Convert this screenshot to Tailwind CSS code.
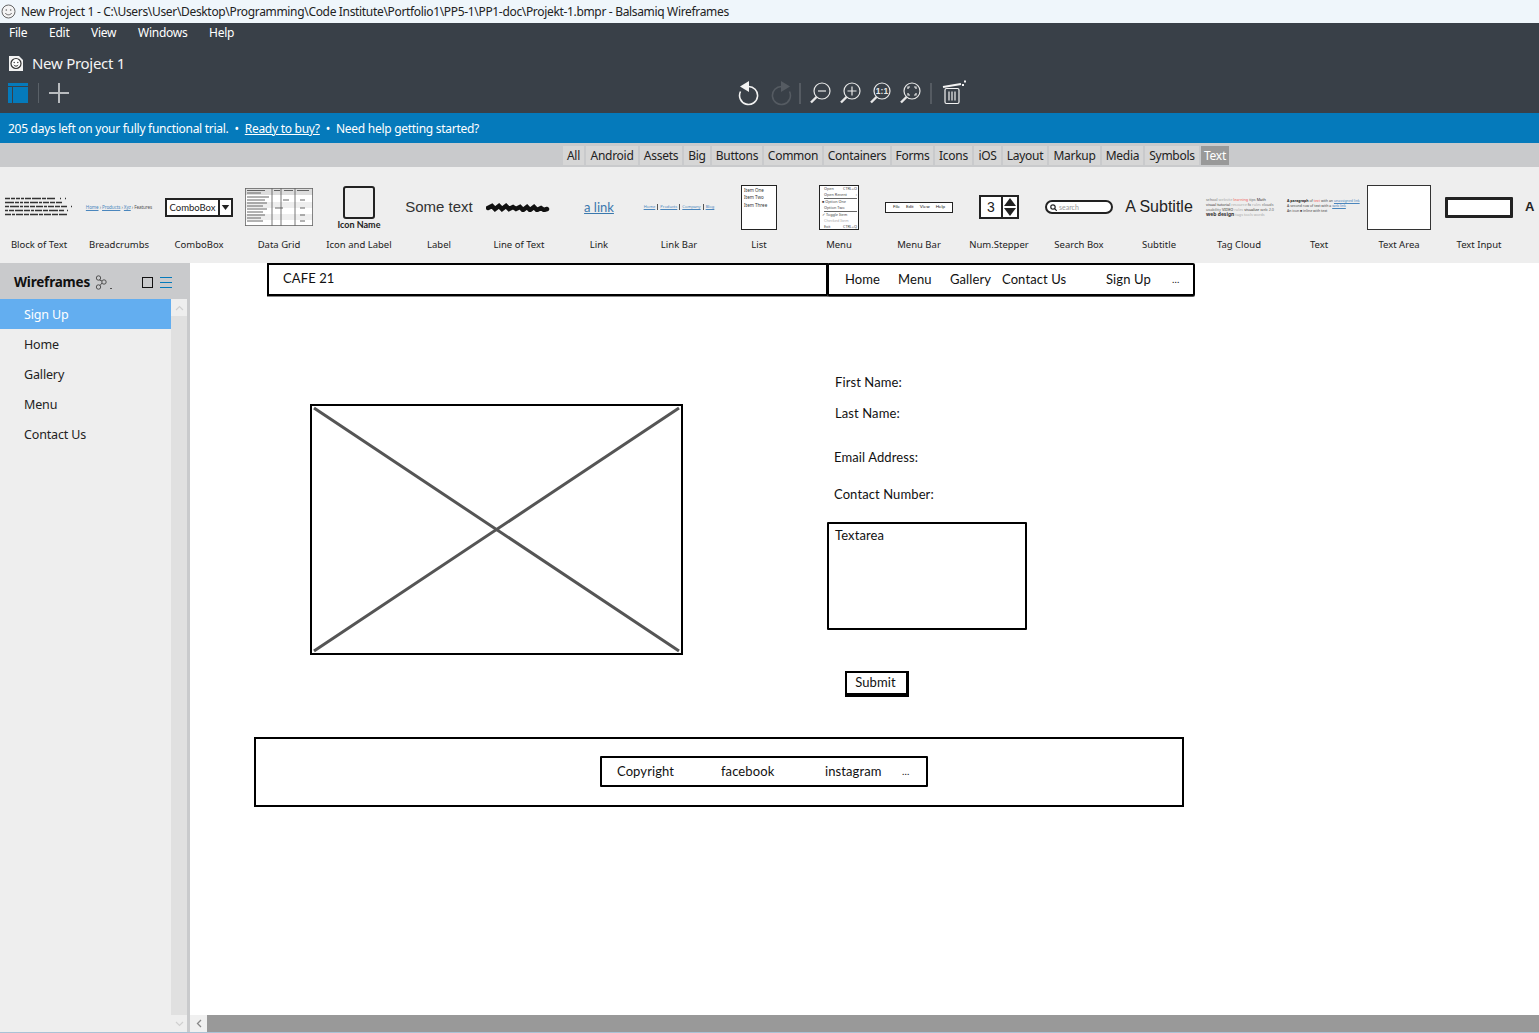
<!DOCTYPE html>
<html lang="en"><head><meta charset="utf-8"><title>Balsamiq Wireframes</title>
<script src="https://cdn.jsdelivr.net/npm/@tailwindcss/browser@4"></script></head>
<body class="m-0 bg-white">
<div class="w-[1539px] h-[1033px] overflow-hidden flex flex-col font-['Noto_Sans',sans-serif] text-[#111]">

<!-- title bar -->
<div class="h-[23px] shrink-0 bg-[#eff6fb] flex items-center text-[12px] tracking-[-0.33px] text-[#222]">
  <svg class="ml-[1px] w-[15px] h-[15px]" viewBox="0 0 15 15" fill="none" stroke="#666" stroke-width="1"><circle cx="7.5" cy="7.5" r="6.5" fill="#f4f4f4"/><circle cx="5.3" cy="6" r=".8" fill="#666" stroke="none"/><circle cx="9.7" cy="6" r=".8" fill="#666" stroke="none"/><path d="M4.3 9c1.2 2.4 5.2 2.4 6.4 0"/></svg>
  <span class="ml-[5px]">New Project 1 - C:\Users\User\Desktop\Programming\Code Institute\Portfolio1\PP5-1\PP1-doc\Projekt-1.bmpr - Balsamiq Wireframes</span>
</div>

<!-- dark header -->
<div class="h-[90px] shrink-0 bg-[#394048] text-white flex flex-col">
  <div class="h-[20px] flex items-center pl-[9px] text-[12px] tracking-[-0.25px]">
    <span class="w-[40px]">File</span><span class="w-[42px]">Edit</span><span class="w-[47px]">View</span><span class="w-[71px]">Windows</span><span>Help</span>
  </div>
  <div class="h-[41px] flex items-center pl-[9px]">
    <svg class="w-[14px] h-[15px]" viewBox="0 0 14 15"><path d="M0 0h10l4 4v11H0z" fill="#f2f2f2"/><circle cx="7" cy="7.5" r="5" fill="#fff" stroke="#333" stroke-width="1.2"/><circle cx="5.2" cy="6.5" r=".7" fill="#333"/><circle cx="8.8" cy="6.5" r=".7" fill="#333"/><path d="M4.8 9c1 1.5 3.4 1.500 4.400 0" stroke="#333" fill="none"/></svg>
    <span class="ml-[9px] text-[15px] tracking-[-0.28px] text-[#f4f4f4]">New Project 1</span>
  </div>
  <div class="h-[22px] -mt-[2px] flex items-center">
    <div class="ml-[8px] w-[20px] h-[20px] flex flex-col gap-[1px]">
      <div class="h-[3px] bg-[#057abb]"></div>
      <div class="flex-1 flex gap-[1px]"><div class="w-[4px] bg-[#057abb]"></div><div class="flex-1 bg-[#057abb]"></div></div>
    </div>
    <div class="ml-[10px] w-px h-[20px] bg-[#5a6168]"></div>
    <svg class="ml-[10px] w-[20px] h-[20px]" viewBox="0 0 20 20" stroke="#b9bcbf" stroke-width="2"><path d="M10 0v20M0 10h20"/></svg>
    <div class="ml-[669px] flex items-center">
      <svg class="w-[24px] h-[26px]" viewBox="0 0 24 26" fill="none" stroke="#f2f2f2" stroke-width="1.6"><path d="M10 6.5a9 9 0 1 1-7.5 5"/><path d="M11 1v11L2 6.5z" fill="#f2f2f2" stroke="none"/></svg>
      <svg class="ml-[6px] w-[24px] h-[26px]" viewBox="0 0 24 26" fill="none" stroke="#555b62" stroke-width="1.6"><path d="M14 6.5a9 9 0 1 0 7.5 5"/><path d="M13 1v11l9-5.5z" fill="#555b62" stroke="none"/></svg>
      <div class="ml-[7px] w-[2px] h-[21px] bg-[#555b62]"></div>
      <svg class="ml-[8px] w-[22px] h-[22px]" viewBox="0 0 22 22" fill="none" stroke="#e8e8e8" stroke-width="1.2"><circle cx="13" cy="9" r="8"/><path d="M7.5 15L2 20.5" stroke-width="2.4"/><path d="M9 9h8"/></svg>
      <svg class="ml-[8px] w-[22px] h-[22px]" viewBox="0 0 22 22" fill="none" stroke="#e8e8e8" stroke-width="1.2"><circle cx="13" cy="9" r="8"/><path d="M7.5 15L2 20.5" stroke-width="2.4"/><path d="M8.5 9h9M13 4.500v9"/></svg>
      <svg class="ml-[8px] w-[22px] h-[22px]" viewBox="0 0 22 22" fill="none" stroke="#e8e8e8" stroke-width="1.2"><circle cx="13" cy="9" r="8"/><path d="M7.500 15L2 20.500" stroke-width="2.4"/><text x="13" y="12" font-size="8.500" font-weight="700" text-anchor="middle" fill="#e8e8e8" stroke="none" font-family="Liberation Sans">1:1</text></svg>
      <svg class="ml-[8px] w-[22px] h-[22px]" viewBox="0 0 22 22" fill="none" stroke="#e8e8e8" stroke-width="1.2"><circle cx="13" cy="9" r="8"/><path d="M7.500 15L2 20.500" stroke-width="2.400"/><path d="M9 7V5h2M15 5h2v2M17 11v2h-2M11 13H9v-2"/></svg>
      <div class="ml-[9px] w-[2px] h-[21px] bg-[#555b62]"></div>
      <svg class="ml-[9px] w-[26px] h-[26px]" viewBox="0 0 26 26" fill="none" stroke="#f2f2f2" stroke-width="1.2"><path d="M2 7l18-3" stroke-width="2"/><path d="M23 1.500h2M21 5h2" stroke-width="2"/><rect x="4" y="8.500" width="14" height="15" rx="1.500"/><path d="M8 11.500v9M11 11.500v9M14 11.500v9"/></svg>
    </div>
  </div>
</div>

<!-- trial banner -->
<div class="h-[30px] shrink-0 bg-[#057abb] text-white flex items-center pl-[8px] pt-[2px] text-[12px] tracking-[-0.28px]">
  <span>205 days left on your fully functional trial.</span><span class="mx-[6px]">•</span><span class="underline">Ready to buy?</span><span class="mx-[6px]">•</span><span>Need help getting started?</span>
</div>

<!-- categories -->
<div class="h-[24px] shrink-0 bg-[#c9cacc] flex items-start pt-[3px] pl-[563px] gap-[2px] text-[12px] tracking-[-0.27px] leading-[19px] text-center text-[#222]">
  <span class="w-[21px] h-[19px] bg-[#d6d6d6]">All</span>
  <span class="w-[52px] h-[19px] bg-[#d6d6d6]">Android</span>
  <span class="w-[42px] h-[19px] bg-[#d6d6d6]">Assets</span>
  <span class="w-[26px] h-[19px] bg-[#d6d6d6]">Big</span>
  <span class="w-[50px] h-[19px] bg-[#d6d6d6]">Buttons</span>
  <span class="w-[58px] h-[19px] bg-[#d6d6d6]">Common</span>
  <span class="w-[66px] h-[19px] bg-[#d6d6d6]">Containers</span>
  <span class="w-[41px] h-[19px] bg-[#d6d6d6]">Forms</span>
  <span class="w-[37px] h-[19px] bg-[#d6d6d6]">Icons</span>
  <span class="w-[27px] h-[19px] bg-[#d6d6d6]">iOS</span>
  <span class="w-[44px] h-[19px] bg-[#d6d6d6]">Layout</span>
  <span class="w-[51px] h-[19px] bg-[#d6d6d6]">Markup</span>
  <span class="w-[41px] h-[19px] bg-[#d6d6d6]">Media</span>
  <span class="w-[54px] h-[19px] bg-[#d6d6d6]">Symbols</span>
  <span class="w-[28px] h-[19px] bg-[#999] text-white">Text</span>
</div>

<!-- library -->
<div class="h-[96px] shrink-0 bg-[#eeeeee] overflow-hidden flex pt-[8px] -ml-px text-[9.500px] leading-[12px] text-center text-[#222]">
  <div class="w-[80px] shrink-0"><div class="h-[64px] flex items-center justify-center">
    <svg class="w-[68px] h-[20px]" viewBox="0 0 68 20" fill="none" stroke="#333" stroke-width="1.700">
      <path stroke-dasharray="5 1 4 1 4 1 3 1 6 1 9 1 4 1 8" d="M0 1.500h64"/>
      <path stroke-dasharray="9 1 4 1 3 1 5 1 8 1 3 1 6 1 5 1 6" d="M0 5.500h60"/>
      <path stroke-dasharray="4 1 9 1 3 1 5 1 5 1 7 1 3 1 6 1 5 1 6" d="M0 9.500h67"/>
      <path stroke-dasharray="3 1 5 1 8 1 6 1 3 1 7 1 5 1 9 1 5" d="M0 13.500h67"/>
      <path stroke-dasharray="6 1 3 1 7 1 5 1 8 1 4 1 7 1 6 1 8" d="M0 17.500h66"/>
    </svg></div><div>Block of Text</div></div>

  <div class="w-[80px] shrink-0"><div class="h-[64px] flex items-center justify-center text-[4.600px] tracking-[-0.1px] whitespace-nowrap text-[#555]">
    <span class="text-[#4a86bd] underline">Home</span>&nbsp;›&nbsp;<span class="text-[#4a86bd] underline">Products</span>&nbsp;›&nbsp;<span class="text-[#4a86bd] underline">Xyz</span>&nbsp;›&nbsp;Features</div><div>Breadcrumbs</div></div>

  <div class="w-[80px] shrink-0"><div class="h-[64px] flex items-center justify-center">
    <div class="w-[68px] h-[19px] border-2 border-[#222] flex items-center bg-white font-['Lato',sans-serif] text-[9.500px]"><span class="flex-1 border-r-2 border-[#222] h-full leading-[15px]">ComboBox</span><svg class="w-[11px] h-[5px]" viewBox="0 0 11 6"><path d="M1 0h9L5.500 6z" fill="#222"/></svg></div></div><div>ComboBox</div></div>

  <div class="w-[80px] shrink-0"><div class="h-[64px] flex items-center justify-center">
    <svg class="w-[68px] h-[38px]" viewBox="0 0 68 38"><rect width="68" height="38" fill="#fff"/><rect width="68" height="7" fill="#ddd"/><rect y="14" width="68" height="6" fill="#eee"/><rect y="26" width="68" height="6" fill="#eee"/><path d="M27 0v38M36 0v38M50 0v38" stroke="#555" stroke-width=".8"/><rect x=".4" y=".4" width="67.200" height="37.200" fill="none" stroke="#666" stroke-width=".8"/><path d="M2 2.500h18M2 5h14M2 9h22M2 12h18M2 15h20M2 18h16M2 21h20M2 24h16M2 27h18M2 30h14M2 33h16M39 2.500h9M52 2.500h12M29 2.500h6M38 12h6M30 20h8M55 12h5M55 20h5M55 27h5M55 33h5" stroke="#555" stroke-width=".9"/></svg></div><div>Data Grid</div></div>

  <div class="w-[80px] shrink-0"><div class="h-[64px] flex flex-col items-center pt-[11px]">
    <div class="w-[32px] h-[33px] border-2 border-[#222] rounded-[3px]"></div><div class="mt-[1px] font-['Lato',sans-serif] font-bold text-[9px] leading-[10px]">Icon Name</div></div><div>Icon and Label</div></div>

  <div class="w-[80px] shrink-0"><div class="h-[64px] flex items-center justify-center font-['Liberation_Sans',sans-serif] text-[15px] text-[#333] whitespace-nowrap">Some text</div><div>Label</div></div>

  <div class="w-[80px] shrink-0"><div class="h-[64px] flex items-center justify-center">
    <svg class="w-[66px] h-[10px]" viewBox="0 0 66 10" fill="none" stroke="#111" stroke-width="4.500" stroke-linecap="round"><path d="M2 6l4-2 3 3 4-3 3 3 4-3 3 3 4-2 3 2 4-2 3 3 4-3 3 3 4-3 3 3 4-2 3 2 3-1"/></svg></div><div>Line of Text</div></div>

  <div class="w-[80px] shrink-0"><div class="h-[64px] flex items-center justify-center font-['Lato',sans-serif] text-[13px] text-[#3a78ad] underline">a link</div><div>Link</div></div>

  <div class="w-[80px] shrink-0"><div class="h-[64px] flex items-center justify-center text-[4.100px] whitespace-nowrap text-[#4a86bd] gap-[2px]">
    <span class="underline">Home</span><span class="w-px h-[6px] bg-[#555]"></span><span class="underline">Products</span><span class="w-px h-[6px] bg-[#555]"></span><span class="underline">Company</span><span class="w-px h-[6px] bg-[#555]"></span><span class="underline">Blog</span></div><div>Link Bar</div></div>

  <div class="w-[80px] shrink-0"><div class="h-[64px] flex items-center justify-center">
    <div class="w-[36px] h-[45px] bg-white border border-[#222] text-left pl-[2px] pt-[1px] text-[4.500px] leading-[7.500px] text-[#333]">Item One<br>Item Two<br>Item Three</div></div><div>List</div></div>

  <div class="w-[80px] shrink-0"><div class="h-[64px] flex items-center justify-center">
    <div class="w-[40px] h-[45px] bg-white border border-[#222] text-left pl-[4px] pr-[1px] text-[3.800px] leading-[6px] text-[#444] whitespace-nowrap">
      <div class="flex justify-between"><span>Open</span><span>CTRL+O</span></div><div class="flex justify-between border-b border-[#666]"><span>Open Recent</span><span>›</span></div><div class="-ml-[2px]">■ Option One</div><div class="border-b border-[#666]">Option Two</div><div class="-ml-[2px]">✓ Toggle Item</div><div class="text-[#aaa]">Checked Item</div><div class="flex justify-between"><span>Exit</span><span>CTRL+Q</span></div>
    </div></div><div>Menu</div></div>

  <div class="w-[80px] shrink-0"><div class="h-[64px] flex items-center justify-center">
    <div class="w-[68px] h-[11px] bg-white border border-[#222] flex items-center justify-center gap-[6px] text-[4.500px] font-['Lato',sans-serif]"><span>File</span><span>Edit</span><span>View</span><span>Help</span></div></div><div>Menu Bar</div></div>

  <div class="w-[80px] shrink-0"><div class="h-[64px] flex items-center justify-center">
    <div class="w-[40px] h-[24px] bg-white border-2 border-[#222] flex items-center font-['Liberation_Sans',sans-serif] text-[14px]"><span class="w-[22px] h-full border-r-2 border-[#222] leading-[20px]">3</span><svg class="flex-1 h-[18px]" viewBox="0 0 14 18" fill="#222"><path d="M7 0l6 8H1zM7 18l6-8H1z"/></svg></div></div><div>Num.Stepper</div></div>

  <div class="w-[80px] shrink-0"><div class="h-[64px] flex items-center justify-center">
    <div class="w-[68px] h-[14px] bg-white border-2 border-[#222] rounded-full flex items-center pl-[3px] gap-[2px] text-[7px] text-[#999] font-['Lato',sans-serif]"><svg class="w-[7px] h-[7px]" viewBox="0 0 7 7" fill="none" stroke="#222" stroke-width="1.200"><circle cx="3" cy="3" r="2.200"/><path d="M4.500 4.500L6.800 6.800"/></svg>search</div></div><div>Search Box</div></div>

  <div class="w-[80px] shrink-0"><div class="h-[64px] flex items-center justify-center font-['Liberation_Sans',sans-serif] text-[16px] text-[#222] whitespace-nowrap">A Subtitle</div><div>Subtitle</div></div>

  <div class="w-[80px] shrink-0"><div class="h-[64px] flex items-center justify-center">
    <div class="w-[66px] text-left text-[3.800px] leading-[5px] text-[#666] whitespace-nowrap">
      <div>school <span class="text-[#aaa]">website</span> <span class="text-[#e55]">learning</span> tips <span class="text-[#333]">Math</span></div>
      <div><span class="text-[#333]">visual tutorial</span> <span class="text-[#aaa]">resource</span> fx <span class="text-[#aaa]">rules</span> clouds</div>
      <div>usability <span class="text-[#333]">VIDEO</span> <span class="text-[#aaa]">rules</span> <span class="text-[#333]">visualize</span> web 2.0</div>
      <div><span class="text-[#333] font-bold text-[5px]">web design</span> <span class="text-[#aaa]">tags tools words</span></div>
    </div></div><div>Tag Cloud</div></div>

  <div class="w-[80px] shrink-0"><div class="h-[64px] flex items-center justify-center">
    <div class="w-[64px] text-left text-[3.500px] leading-[5px] text-[#444] whitespace-nowrap -mt-[4px]">
      <div><b class="text-[#222]">A paragraph</b> of <span class="text-[#e55]">text</span> with an <span class="text-[#4a86bd] underline">unassigned link</span></div>
      <div>A second row of text with a <span class="text-[#4a86bd] underline">web link</span></div>
      <div>An icon ■ inline with text</div>
    </div></div><div>Text</div></div>

  <div class="w-[80px] shrink-0"><div class="h-[64px] flex items-center justify-center"><div class="w-[64px] h-[45px] bg-white border border-[#333]"></div></div><div>Text Area</div></div>

  <div class="w-[80px] shrink-0"><div class="h-[64px] flex items-center justify-center"><div class="w-[68px] h-[21px] bg-white border-[3px] border-[#222] rounded-[1px]"></div></div><div>Text Input</div></div>

  <div class="w-[80px] shrink-0"><div class="h-[64px] flex items-center pl-[6px] font-['Liberation_Sans',sans-serif] font-bold text-[13px] text-[#222]">A</div></div>
</div>

<!-- main -->
<div class="flex-1 flex min-h-0">
  <aside class="w-[190px] shrink-0 flex flex-col border-r-[3px] border-[#c9cacc] bg-[#eeeeee]">
    <div class="h-[36px] shrink-0 bg-[#c9cacc] flex items-center pl-[14px] pt-[2px]">
      <span class="text-[13.500px] font-bold tracking-[-0.2px] text-[#111]">Wireframes</span>
      <svg class="ml-[5px] w-[18px] h-[15px]" viewBox="0 0 18 15" fill="none" stroke="#444" stroke-width=".9"><circle cx="3.500" cy="3" r="2.200"/><circle cx="9" cy="7" r="2.200"/><circle cx="3.500" cy="12" r="2.200"/><path d="M4.500 5L7 6M7 8l-2 2.500M15 13l1 1 1-1"/></svg>
      <span class="ml-[29px] w-[11px] h-[11px] border border-[#111]"></span>
      <svg class="ml-[7px] w-[12px] h-[11px]" viewBox="0 0 12 11" stroke="#057abb" stroke-width="1"><path d="M0 .5h12M0 5.500h12M0 10.500h12"/></svg>
    </div>
    <div class="flex-1 flex min-h-0">
      <div class="w-[171px] shrink-0 text-[12.500px] tracking-[-0.15px] leading-[32px] text-[#222]">
        <div class="h-[30px] pl-[24px] bg-[#63aef0] text-white">Sign Up</div>
        <div class="h-[30px] pl-[24px]">Home</div>
        <div class="h-[30px] pl-[24px]">Gallery</div>
        <div class="h-[30px] pl-[24px]">Menu</div>
        <div class="h-[30px] pl-[24px]">Contact Us</div>
      </div>
      <div class="w-[16px] shrink-0 bg-[#e0e0e0] flex flex-col justify-between">
        <div class="h-[17px] bg-[#eeeeee] flex items-center justify-center"><svg class="w-[9px] h-[6px]" viewBox="0 0 9 6" fill="none" stroke="#d0d0d0" stroke-width="1.200"><path d="M1 5l3.500-3.500L8 5"/></svg></div>
        <div class="h-[17px] bg-[#eeeeee] flex items-center justify-center"><svg class="w-[9px] h-[6px]" viewBox="0 0 9 6" fill="none" stroke="#d0d0d0" stroke-width="1.200"><path d="M1 1l3.500 3.500L8 1"/></svg></div>
      </div>
    </div>
  </aside>

  <!-- canvas -->
  <div class="relative flex-1 bg-white font-['Lato',sans-serif] text-[13px] tracking-[0.1px] text-[#111] overflow-hidden">
    <div class="absolute left-[77px] top-[1px] w-[561px] h-[33px] border-2 border-black flex items-center pl-[14px] -mt-px shadow-[0_1px_0_#888]"><span class="-mt-[1px]">CAFE 21</span></div>
    <div class="absolute left-[637px] top-[1px] w-[368px] h-[33px] border-2 border-black rounded-[2px] bg-white flex items-center pl-[16px] shadow-[0_1px_0_#555] -mt-px">
      <span class="w-[53px]">Home</span><span class="w-[52px]">Menu</span><span class="w-[52px]">Gallery</span><span class="w-[104px]">Contact Us</span><span class="w-[66px]">Sign Up</span><span class="text-[10px]">...</span>
    </div>

    <div class="absolute left-[120px] top-[141px] w-[373px] h-[251px] border-2 border-black">
      <svg class="w-full h-full" viewBox="0 0 369 247" preserveAspectRatio="none" stroke="#555" stroke-width="3"><path d="M2 2L367 245M367 2L2 245"/></svg>
    </div>

    <span class="absolute left-[645px] top-[110px]">First Name:</span>
    <span class="absolute left-[645px] top-[141px]">Last Name:</span>
    <span class="absolute left-[644px] top-[185px]">Email Address:</span>
    <span class="absolute left-[644px] top-[222px]">Contact Number:</span>
    <div class="absolute left-[637px] top-[259px] w-[200px] h-[108px] border-2 border-black rounded-[1px] pl-[6px] leading-[22px]">Textarea</div>
    <div class="absolute left-[655px] top-[408px] w-[64px] h-[26px] border-2 border-black border-r-[3px] border-b-[4px] pr-[2px] text-center leading-[18px]">Submit</div>

    <div class="absolute left-[64px] top-[474px] w-[930px] h-[70px] border-2 border-black flex items-start pt-[17px] pl-[344px]">
      <div class="w-[328px] h-[31px] border-2 border-black rounded-[1px] flex items-center pl-[15px]">
        <span class="w-[104px]">Copyright</span><span class="w-[104px]">facebook</span><span class="w-[77px]">instagram</span><span class="text-[10px]">...</span>
      </div>
    </div>

    <div class="absolute left-0 right-0 bottom-0 h-[17px] flex bg-[#999]">
      <div class="w-[17px] h-full bg-[#f0f0f0] flex items-center justify-center"><svg class="w-[6px] h-[9px]" viewBox="0 0 6 9" fill="none" stroke="#888" stroke-width="1.300"><path d="M5 1L1.500 4.500 5 8"/></svg></div>
    </div>
  </div>
</div>
<div class="h-px shrink-0 bg-[#a9c2d6]"></div>
</div>
</body></html>
